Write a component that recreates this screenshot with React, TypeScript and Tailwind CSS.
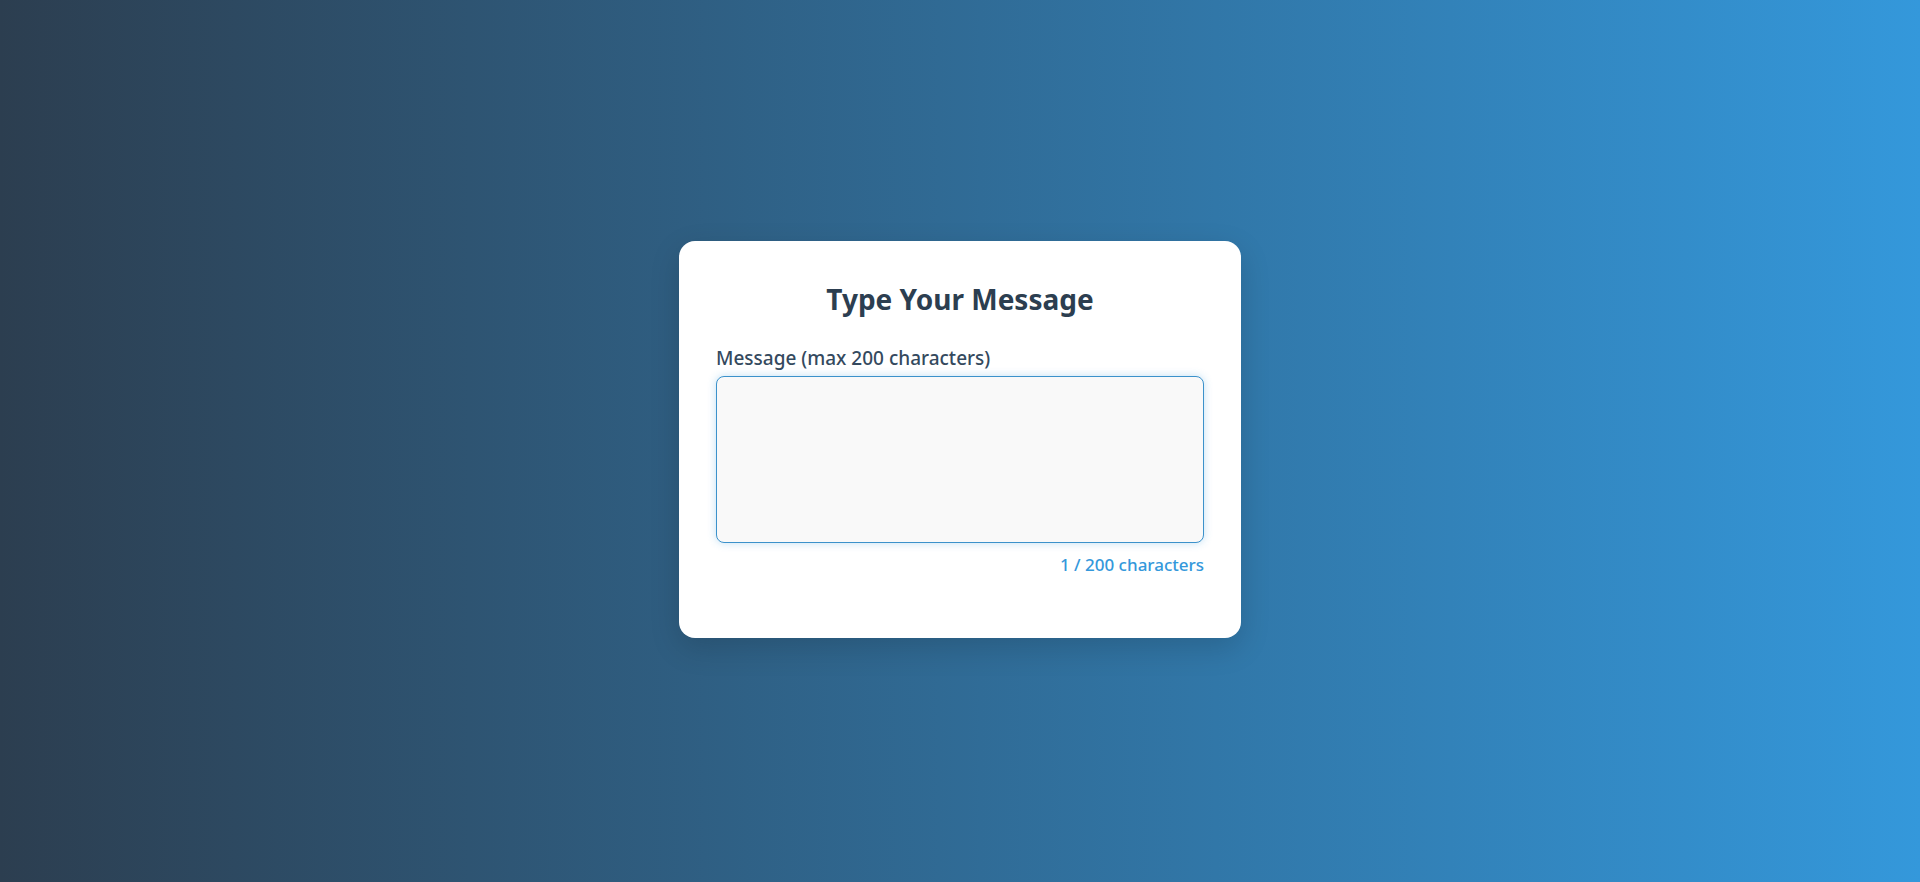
import { useState } from "react";

const MAX_LENGTH = 200;

export default function App() {
  const [message, setMessage] = useState("\n");

  return (
    <main className="flex min-h-screen items-center justify-center bg-[linear-gradient(to_right,#2c3e50,#3498db)] pb-[3px] font-['Noto_Sans',sans-serif]">
      <section className="w-full max-w-[562px] rounded-2xl bg-white px-[37px] pt-9 pb-[59px] shadow-[0_10px_30px_rgba(0,0,0,0.15)]">
        <h1 className="mb-6 text-center text-[28px] leading-[44px] font-bold text-[#2c3e50]">Type Your Message</h1>
        <label htmlFor="message" className="mb-1 block text-[19px] leading-[27px] font-medium text-[#34495e]">
          Message (max 200 characters)
        </label>
        <textarea
          id="message"
          maxLength={MAX_LENGTH}
          value={message}
          onChange={(e) => setMessage(e.target.value)}
          className="block h-[167px] w-full resize-none rounded-lg border border-[#3c92cb] bg-[#f9f9f9] p-3 text-base shadow-[0_0_8px_rgba(52,152,219,0.3)] outline-none"
        />
        <p className="mt-2 text-right text-[17px] leading-7 font-medium text-[#3498db]">
          {message.length} / {MAX_LENGTH} characters
        </p>
      </section>
    </main>
  );
}
